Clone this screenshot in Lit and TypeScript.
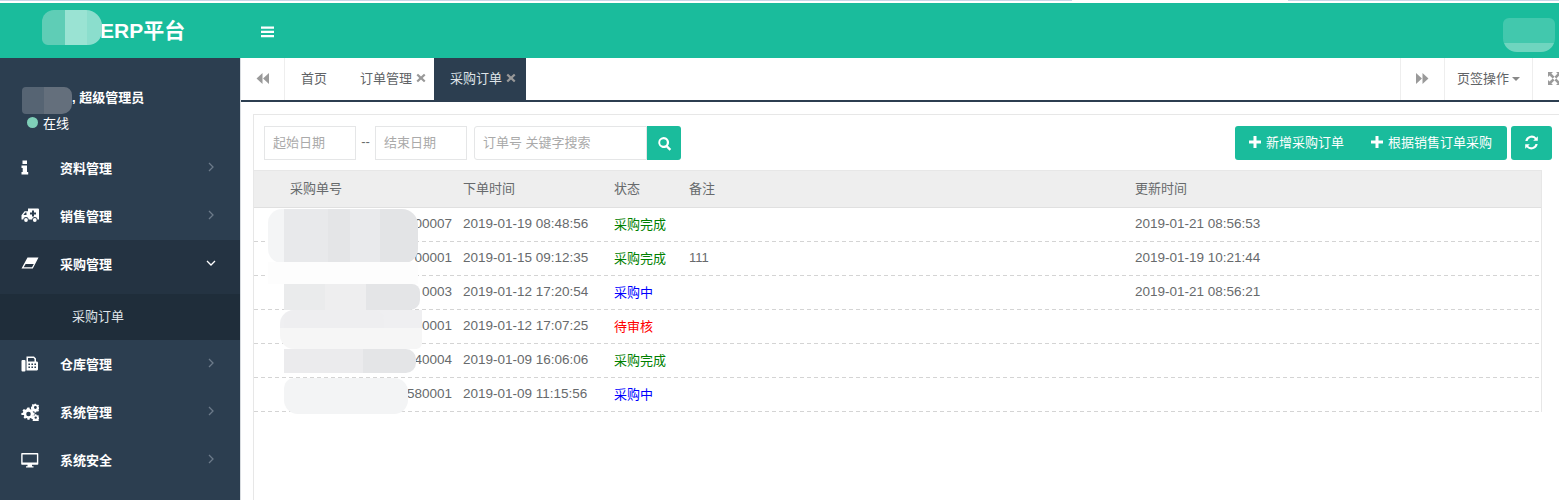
import { LitElement, html, css, svg } from "lit";
import { customElement } from "lit/decorators.js";

const ICONS: Record<string, unknown> = {
  info: svg`<path d="M1.500 1.500h4.500V5H1.500zM.5 6.500h5.500V13h1.200v2.500H.5V13h1.200V9H.5z"/>`,
  ambulance: svg`<path fill-rule="evenodd" d="M7 1.500h10a1 1 0 0 1 1 1V12.500h-1.600a2.600 2.600 0 0 0-5.200 0H7.600a2.600 2.600 0 0 0-5.200 0H.5V8.200L3.600 4.200H7zM11 3.500v2H9v2h2v2h2v-2h2v-2h-2v-2zM2.400 8h3.100V5.500H4.300z"/><circle cx="5" cy="13" r="1.900"/><circle cx="13.800" cy="13" r="1.900"/>`,
  eraser: svg`<path fill-rule="evenodd" d="M6.500 2.500H17.500L11.800 13.500H.5zM4.600 9 2.700 12.300h8.300L12.800 9z"/>`,
  fax: svg`<path fill-rule="evenodd" d="M5.500 1.500h7.500l2 2v3h1a1.200 1.200 0 0 1 1 1.200v6.600a1.200 1.200 0 0 1-1 1.200H5.500zM7 3v3.500h6.500V4.200L12.600 3zM7.400 8.500v1.600H9V8.500zm3 0v1.600H12V8.500zm3 0v1.600H15V8.500zm-6 3v1.600H9v-1.600zm3 0v1.600H12v-1.600zm3 0v1.600H15v-1.600z"/><rect x=".5" y="5" width="4" height="11.500" rx="1"/>`,
  cogs: svg`<path fill-rule="evenodd" d="M6.500 4.600h2l.3 1.500 1 .4 1.300-.8 1.400 1.400-.8 1.300.4 1 1.500.3v2l-1.500.3-.4 1 .8 1.300-1.400 1.400-1.300-.8-1 .4-.3 1.500h-2l-.3-1.500-1-.4-1.300.8-1.400-1.400.8-1.300-.4-1L.4 12V10l1.500-.3.4-1-.8-1.300 1.400-1.400 1.300.8 1-.4zM7.500 8.700a2.300 2.300 0 1 0 0 4.600 2.300 2.300 0 0 0 0-4.600z"/><path fill-rule="evenodd" d="M13.600.8h1.600l.2 1 .7.3.9-.5 1 1-.5.9.3.7 1 .2v1.500l-1 .2-.3.7.5.9-1 1-.9-.5-.7.3-.2 1h-1.600l-.2-1-.7-.3-.9.5-1-1 .5-.9-.3-.7-1-.2V3.800l1-.2.3-.7-.5-.9 1-1 .9.5.7-.3zM14.400 3.100a1.400 1.400 0 1 0 0 2.800 1.400 1.400 0 0 0 0-2.800z"/><path fill-rule="evenodd" d="M14 12.300h1.400l.2.9.6.3.8-.4.9.9-.4.8.3.6.9.2v1.300l-.9.2-.3.6.4.8-.9.9-.8-.4-.6.3-.2.9H14l-.2-.9-.6-.3-.8.4-.9-.9.4-.8-.3-.6-.9-.2v-1.300l.9-.2.3-.6-.4-.8.9-.9.8.4.6-.3zM14.700 14.400a1.200 1.200 0 1 0 0 2.400 1.200 1.200 0 0 0 0-2.400z" transform="translate(0 -1)"/>`,
  desktop: svg`<path fill-rule="evenodd" d="M1 2h15.500a.8.8 0 0 1 .8.8V13a.8.8 0 0 1-.8.8H11v1.400h1.500v1.300H5v-1.300h1.500v-1.400H1a.8.8 0 0 1-.8-.8V2.800A.8.8 0 0 1 1 2zM1.600 3.400v8.200h14.300V3.400z"/>`,
};

const ROWS = [
  ["00007", "2019-01-19 08:48:56", "采购完成", "done", "", "2019-01-21 08:56:53"],
  ["00001", "2019-01-15 09:12:35", "采购完成", "done", "111", "2019-01-19 10:21:44"],
  ["0003", "2019-01-12 17:20:54", "采购中", "doing", "", "2019-01-21 08:56:21"],
  ["00001", "2019-01-12 17:07:25", "待审核", "wait", "", ""],
  ["40004", "2019-01-09 16:06:06", "采购完成", "done", "", ""],
  ["580001", "2019-01-09 11:15:56", "采购中", "doing", "", ""],
];

@customElement("app-root")
export class AppRoot extends LitElement {
  static styles = css`
    :host {
      display: block;
      height: 500px;
      overflow: hidden;
      position: relative;
      background: #fff;
      color: #676a6c;
      font: 13px "Liberation Sans", "Noto Sans CJK SC", sans-serif;
    }
    .topline { height: 3px; background: #fff; display: flex; }
    .topline i { display: block; height: 1px; background: #c8d6e8; }
    .topline .t1 { width: 1072px; }
    .topline .t2 { width: 216px; background: #fff; }
    .topline .t3 { flex: 1; }
    .header { height: 55px; background: #1abc9c; display: flex; align-items: center; color: #fff; }
    .logo { width: 240px; box-sizing: border-box; padding: 0 0 0 100px; font-size: 21px; font-weight: 700; line-height: 55px; }
    .burger { display: block; margin-left: 21px; margin-top: 2px; }
    .body { display: flex; height: 442px; }
    .side { width: 240px; flex: none; background: #2c3e50; color: #fff; font-weight: 700; box-sizing: border-box; }
    .user { height: 86px; padding: 28px 0 0 22px; box-sizing: border-box; }
    .user .name { display: flex; align-items: center; height: 20px; }
    .user .gap { width: 50px; }
    .user .status { display: flex; align-items: center; height: 18px; margin-top: 7px; font-weight: 400; gap: 5px; margin-left: 5px; }
    .dot { width: 11px; height: 11px; border-radius: 50%; background: #7fcfb8; }
    .item { height: 48px; display: flex; align-items: center; padding: 0 0 2px 21px; box-sizing: border-box; }
    .item svg.ic { width: 18px; height: 18px; fill: #fff; flex: none; margin-top: 2px; }
    .item .label { margin-left: 21px; flex: 1; }
    .item .chev { width: 8px; height: 10px; margin-right: 25px; stroke: #6c7a89; stroke-width: 1.300; fill: none; flex: none; }
    .item.active { background: #243342; height: 54px; padding-bottom: 8px; }
    .item.active .chev { stroke: #fff; width: 10px; margin-right: 24px; }
    .sub { height: 46px; background: #1f2d3a; display: flex; align-items: center; padding: 0 0 4px 72px; box-sizing: border-box; font-weight: 400; color: #dfe4e8; }
    .main { flex: 1; min-width: 0; display: flex; flex-direction: column; border-left: 1px solid #d8dce0; }
    .tabs { height: 44px; box-sizing: border-box; flex: none; display: flex; border-bottom: 2px solid #2c3e50; background: #fff; }
    .tab { display: flex; align-items: center; justify-content: center; box-sizing: border-box; flex: none; color: #5f6366; padding-bottom: 3px; }
    .tab .x { margin-left: 4px; width: 10px; height: 10px; fill: #999; flex: none; }
    .tab svg { display: block; }
    .nav { width: 44px; border-right: 1px solid #eee; padding-bottom: 1px; }
    .nav svg { width: 13px; height: 13px; fill: #9a9a9a; }
    .home { width: 58px; }
    .order { width: 91px; justify-content: flex-start; padding-left: 17px; }
    .cur { width: 92px; background: #2c3e50; color: #dfe4e8; justify-content: flex-start; padding-left: 16px; }
    .spacer { flex: 1; border-right: 1px solid #eee; }
    .ops { width: 88px; border-right: 1px solid #eee; gap: 3px; }
    .caret { width: 0; height: 0; border: 4px solid transparent; border-top-color: #888; border-bottom: 0; margin-top: 2px; }
    .full { width: 26px; justify-content: flex-start; padding-left: 15px; padding-bottom: 1px; }
    .full svg { width: 13px; height: 13px; fill: #9a9a9a; flex: none; }
    .page { flex: 1; padding: 12px 0 0 12px; min-height: 0; }
    .panel { height: 100%; border: 1px solid #e7e7e7; border-right: 0; border-bottom: 0; box-sizing: border-box; padding-top: 11px; }
    .bar { display: flex; align-items: stretch; height: 34px; padding: 0 0 0 10px; }
    .inp { box-sizing: border-box; border: 1px solid #e5e6e7; color: #aaa; display: flex; align-items: center; padding: 0 0 3px 8px; width: 92px; background: #fff; }
    .dash { width: 19px; text-align: center; line-height: 31px; color: #676a6c; }
    .kw { width: 173px; margin-left: 7px; border-radius: 3px 0 0 3px; }
    .sbtn { width: 34px; background: #1abc9c; border-radius: 0 3px 3px 0; display: flex; align-items: center; justify-content: center; }
    .sbtn svg { width: 15px; height: 15px; fill: #fff; }
    .grow { flex: 1; }
    .btns { display: flex; margin-right: 7px; }
    .btn { background: #1abc9c; color: #fff; display: flex; align-items: center; border-radius: 3px; height: 34px; padding-bottom: 3px; box-sizing: border-box; }
    .btn svg { width: 12px; height: 12px; fill: #fff; margin-right: 5px; }
    .b1 { width: 272px; padding-left: 14px; }
    .b1 .s2 { display: flex; align-items: center; margin-left: 27px; }
    .b1 .s1 { display: flex; align-items: center; }
    .b2 { width: 41px; justify-content: center; margin-left: 4px; padding-bottom: 1px; }
    .b2 svg { margin: 0; width: 15px; height: 15px; }
    .tbl { margin-top: 10px; width: 1287px; border-right: 1px solid #e7e7e7; }
    .row { display: grid; grid-template-columns: 198px 151px 75px 446px 1fr; align-items: center; }
    .row > div { padding-left: 11px; white-space: nowrap; }
    .head { height: 38px; box-sizing: border-box; background: #eee; border-top: 1px solid #e7e7e7; border-bottom: 1px solid #e0e0e0; padding-bottom: 4px; }
    .head > div:first-child { padding-left: 36px; }
    .dat {
      height: 34px;
      box-sizing: border-box;
      padding-bottom: 3px;
      font-size: 13.500px;
      background: repeating-linear-gradient(90deg, #d4d4d4 0 4px, transparent 4px 7px) bottom / 100% 1px no-repeat;
    }
    .dat > div:first-child { text-align: right; padding: 0; }
    .done { color: #008000; font-size: 13px; }
    .doing { color: #0000ff; font-size: 13px; }
    .wait { color: #ff0000; font-size: 13px; }
    .note { font-size: 13px; }
    .blot { position: absolute; pointer-events: none; }
    .blot.logo1 { left: 42px; top: 10px; width: 60px; height: 35px; background: linear-gradient(90deg, #5fcdb6 0 38%, #9ae3d3 38% 75%, #8bdecd 75%); border-radius: 12px 16px 14px 6px; }
    .blot.av { left: 1503px; top: 18px; width: 52px; height: 34px; background: linear-gradient(#42c8ad 0 74%, #6fd5bf 74%); border-radius: 6px 6px 14px 14px; }
    .blot.nm { left: 22px; top: 87px; width: 50px; height: 27px; background: linear-gradient(90deg, #566473 0 44%, #646f7c 44%); border-radius: 4px 8px 10px 4px; }
    .blot.r1 { left: 268px; top: 209px; width: 150px; height: 54px; background: linear-gradient(90deg, #f4f5f6 0 11%, #e8e9eb 11% 40%, #e4e5e7 40% 55%, #e9eaec 55% 75%, #e3e4e6 75%); border-radius: 14px 16px 14px 14px; }
    .blot.r1b { left: 268px; top: 262px; width: 150px; height: 22px; background: #fdfdfd; }
    .blot.r2 { left: 284px; top: 284px; width: 136px; height: 26px; background: linear-gradient(90deg, #eaebec 0 30%, #eeeeef 30% 60%, #e4e5e7 60%); border-radius: 0 8px 10px 0; }
    .blot.r3 { left: 280px; top: 310px; width: 142px; height: 39px; background: linear-gradient(#efeff1 0 45%, #f6f6f6 45%); border-radius: 14px 0 6px 14px; }
    .blot.r3b { left: 284px; top: 310px; width: 100px; height: 18px; background: #eeeef0; border-radius: 10px 10px 0 0; }
    .blot.r4 { left: 284px; top: 349px; width: 132px; height: 24px; background: linear-gradient(90deg, #ebebed 0 60%, #e4e5e7 60%); border-radius: 0 10px 10px 0; }
    .blot.r5 { left: 284px; top: 378px; width: 124px; height: 36px; background: #f3f4f5; border-radius: 10px 14px 14px 14px; }
  `;

  private item(ic: string, label: string, active = false) {
    return html`<div class="item ${active ? "active" : ""}">
      <svg class="ic" viewBox="0 0 18 18">${ICONS[ic]}</svg>
      <span class="label">${label}</span>
      <svg class="chev" viewBox="0 0 ${active ? 10 : 8} 10">
        ${active ? svg`<path d="M1 3l4 4 4-4"/>` : svg`<path d="M2 1l4 4-4 4"/>`}
      </svg>
    </div>`;
  }

  render() {
    const x = html`<svg class="x" viewBox="0 0 10 10"><path d="M2 .8 5 3.500 8 .8 9.500 2.300 6.700 5l2.800 2.700L8 9.200 5 6.500 2 9.200.5 7.700 3.300 5 .5 2.300z"/></svg>`;
    const plus = html`<svg viewBox="0 0 12 12"><path d="M4.500 0h3v4.500H12v3H7.500V12h-3V7.500H0v-3h4.500z"/></svg>`;
    return html`
      <div class="topline"><i class="t1"></i><i class="t2"></i><i class="t3"></i></div>
      <div class="header">
        <div class="logo">ERP平台</div>
        <svg class="burger" width="13" height="12" viewBox="0 0 13 12" fill="#fff"><path d="M0 .5h13v2.200H0zM0 4.800h13V7H0zM0 9.100h13v2.200H0z"/></svg>
      </div>
      <div class="body">
        <div class="side">
          <div class="user">
            <div class="name"><span class="gap"></span>, 超级管理员</div>
            <div class="status"><span class="dot"></span>在线</div>
          </div>
          ${this.item("info", "资料管理")}
          ${this.item("ambulance", "销售管理")}
          ${this.item("eraser", "采购管理", true)}
          <div class="sub">采购订单</div>
          ${this.item("fax", "仓库管理")}
          ${this.item("cogs", "系统管理")}
          ${this.item("desktop", "系统安全")}
        </div>
        <div class="main">
          <div class="tabs">
            <div class="tab nav"><svg viewBox="0 0 12 12"><path d="M6 1v10L.5 6zM12 1v10L6.500 6z"/></svg></div>
            <div class="tab home">首页</div>
            <div class="tab order">订单管理${x}</div>
            <div class="tab cur">采购订单${x}</div>
            <div class="spacer"></div>
            <div class="tab nav"><svg viewBox="0 0 12 12"><path d="M0 1v10L5.500 6zM6 1v10l5.500-5z"/></svg></div>
            <div class="tab ops">页签操作<span class="caret"></span></div>
            <div class="tab full"><svg viewBox="0 0 13 13"><path d="M0 0h5L3.400 1.600 6.500 4.700 4.700 6.500 1.600 3.400 0 5zM13 0v5l-1.600-1.600-3.100 3.100-1.800-1.800 3.100-3.100L8 0zM0 13V8l1.600 1.600 3.100-3.100 1.800 1.800-3.100 3.100L5 13zM13 13H8l1.600-1.600-3.100-3.100 1.800-1.800 3.100 3.100L13 8z"/></svg></div>
          </div>
          <div class="page">
            <div class="panel">
              <div class="bar">
                <div class="inp">起始日期</div>
                <div class="dash">--</div>
                <div class="inp">结束日期</div>
                <div class="inp kw">订单号 关键字搜索</div>
                <div class="sbtn"><svg viewBox="0 0 15 15"><path fill-rule="evenodd" d="M6.500 1a5.500 5.500 0 0 1 4.400 8.800l3.300 3.300-1.600 1.600-3.300-3.300A5.500 5.500 0 1 1 6.500 1zm0 2.200a3.300 3.300 0 1 0 0 6.600 3.300 3.300 0 0 0 0-6.600z"/></svg></div>
                <div class="grow"></div>
                <div class="btns">
                  <div class="btn b1"><span class="s1">${plus}新增采购订单</span><span class="s2">${plus}根据销售订单采购</span></div>
                  <div class="btn b2"><svg viewBox="0 0 15 15"><path d="M13.800 1.200v4.600H9.200l1.700-1.700A4.300 4.300 0 0 0 3.500 6H1.300a6.400 6.400 0 0 1 11-3.300zM1.200 13.800V9.200h4.600l-1.700 1.700A4.300 4.300 0 0 0 11.500 9h2.200a6.400 6.400 0 0 1-11 3.300z"/></svg></div>
                </div>
              </div>
              <div class="tbl">
                <div class="row head"><div>采购单号</div><div>下单时间</div><div>状态</div><div>备注</div><div>更新时间</div></div>
                ${ROWS.map(
                  (r) => html`<div class="row dat"><div>${r[0]}</div><div>${r[1]}</div><div class=${r[3]}>${r[2]}</div><div class="note">${r[4]}</div><div>${r[5]}</div></div>`
                )}
              </div>
            </div>
          </div>
        </div>
      </div>
      <div class="blot logo1"></div>
      <div class="blot av"></div>
      <div class="blot nm"></div>
      <div class="blot r1"></div><div class="blot r1b"></div><div class="blot r2"></div><div class="blot r3"></div><div class="blot r3b"></div><div class="blot r4"></div><div class="blot r5"></div>
    `;
  }
}
